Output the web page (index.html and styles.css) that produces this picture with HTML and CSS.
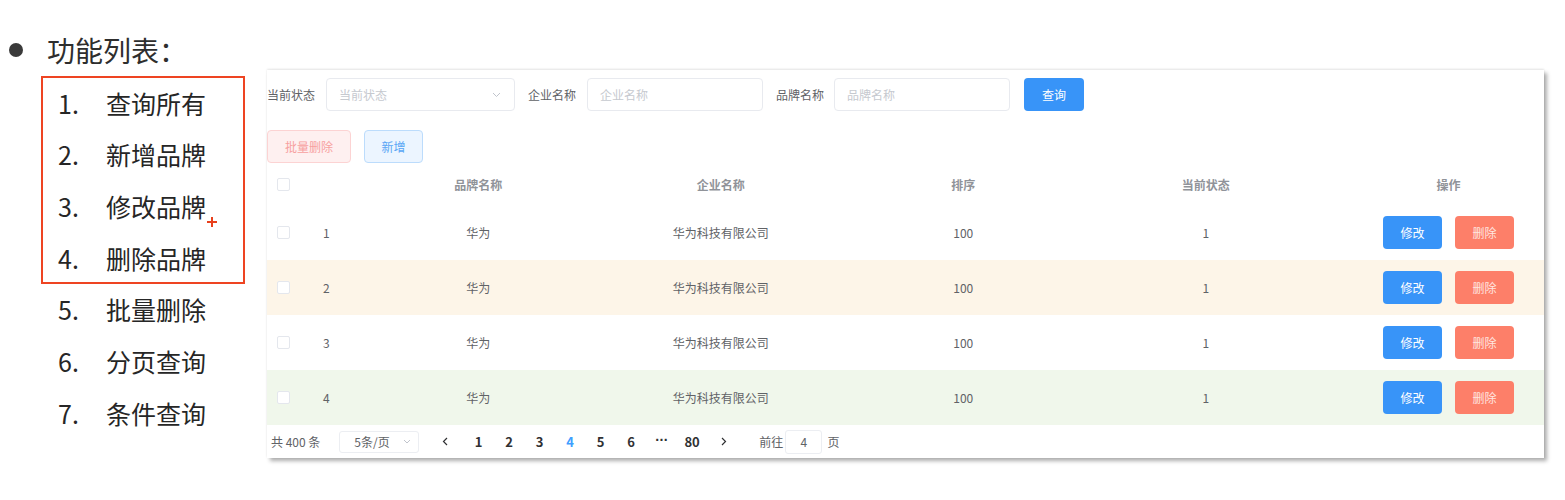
FILE: index.html
```html
<!DOCTYPE html>
<html lang="zh-CN">
<head>
<meta charset="utf-8">
<title>功能列表</title>
<link rel="stylesheet" href="styles.css">
</head>
<body>
<div class="slide">
  <div class="title"><span class="dot"></span><span class="title-text">功能列表：</span></div>
  <div class="content">
    <div class="features">
      <div class="boxed">
        <div class="item"><span class="num">1.</span>查询所有</div>
        <div class="item"><span class="num">2.</span>新增品牌</div>
        <div class="item"><span class="num">3.</span>修改品牌</div>
        <div class="item"><span class="num">4.</span>删除品牌</div>
        <svg class="cursor-plus" width="10" height="10" viewBox="0 0 10 10"><path d="M5 0v10M0 5h10" stroke="#e8401c" stroke-width="2"/></svg>
      </div>
      <div class="item plain"><span class="num">5.</span>批量删除</div>
      <div class="item plain"><span class="num">6.</span>分页查询</div>
      <div class="item plain"><span class="num">7.</span>条件查询</div>
    </div>

    <div class="panel">
      <div class="form-row">
        <span class="label">当前状态</span>
        <div class="control select">
          <span class="ph">当前状态</span>
          <svg class="chev" width="9" height="6" viewBox="0 0 9 6"><path d="M1 1l3.5 3.5L8 1" fill="none" stroke="#c0c4cc" stroke-width="1"/></svg>
        </div>
        <span class="label">企业名称</span>
        <div class="control input"><span class="ph">企业名称</span></div>
        <span class="label label-tight">品牌名称</span>
        <div class="control input"><span class="ph">品牌名称</span></div>
        <button class="btn btn-query">查询</button>
      </div>

      <div class="btn-row">
        <button class="btn btn-danger-plain">批量删除</button>
        <button class="btn btn-primary-plain">新增</button>
      </div>

      <div class="table">
        <div class="tr th">
          <div class="cell"><span class="checkbox"></span></div>
          <div class="cell idx"></div>
          <div class="cell">品牌名称</div>
          <div class="cell">企业名称</div>
          <div class="cell">排序</div>
          <div class="cell">当前状态</div>
          <div class="cell op">操作</div>
        </div>
        <div class="tr">
          <div class="cell"><span class="checkbox"></span></div>
          <div class="cell idx">1</div>
          <div class="cell">华为</div>
          <div class="cell">华为科技有限公司</div>
          <div class="cell">100</div>
          <div class="cell">1</div>
          <div class="cell op"><button class="btn btn-edit">修改</button><button class="btn btn-del">删除</button></div>
        </div>
        <div class="tr warning">
          <div class="cell"><span class="checkbox"></span></div>
          <div class="cell idx">2</div>
          <div class="cell">华为</div>
          <div class="cell">华为科技有限公司</div>
          <div class="cell">100</div>
          <div class="cell">1</div>
          <div class="cell op"><button class="btn btn-edit">修改</button><button class="btn btn-del">删除</button></div>
        </div>
        <div class="tr">
          <div class="cell"><span class="checkbox"></span></div>
          <div class="cell idx">3</div>
          <div class="cell">华为</div>
          <div class="cell">华为科技有限公司</div>
          <div class="cell">100</div>
          <div class="cell">1</div>
          <div class="cell op"><button class="btn btn-edit">修改</button><button class="btn btn-del">删除</button></div>
        </div>
        <div class="tr success">
          <div class="cell"><span class="checkbox"></span></div>
          <div class="cell idx">4</div>
          <div class="cell">华为</div>
          <div class="cell">华为科技有限公司</div>
          <div class="cell">100</div>
          <div class="cell">1</div>
          <div class="cell op"><button class="btn btn-edit">修改</button><button class="btn btn-del">删除</button></div>
        </div>
      </div>

      <div class="pager">
        <span class="total">共 400 条</span>
        <div class="sizes">
          <span>5条/页</span>
          <svg class="chev" width="8" height="5" viewBox="0 0 8 5"><path d="M1 1l3 3 3-3" fill="none" stroke="#c0c4cc" stroke-width="1"/></svg>
        </div>
        <span class="nav prev"><svg width="6" height="9" viewBox="0 0 6 9"><path d="M5 1L1.5 4.5 5 8" fill="none" stroke="#303133" stroke-width="1.2"/></svg></span>
        <div class="pages">
          <span class="pg">1</span>
          <span class="pg">2</span>
          <span class="pg">3</span>
          <span class="pg active">4</span>
          <span class="pg">5</span>
          <span class="pg">6</span>
          <span class="pg more">···</span>
          <span class="pg">80</span>
        </div>
        <span class="nav next"><svg width="6" height="9" viewBox="0 0 6 9"><path d="M1 1l3.5 3.5L1 8" fill="none" stroke="#303133" stroke-width="1.2"/></svg></span>
        <span class="jump">前往</span>
        <div class="jump-input">4</div>
        <span class="jump-suffix">页</span>
      </div>
    </div>
  </div>
</div>
</body>
</html>
```

FILE: styles.css
```css
* { box-sizing: border-box; }

html, body {
  margin: 0;
  padding: 0;
  background: #ffffff;
}

body {
  font-family: "Noto Sans CJK SC", "Noto Sans", sans-serif;
  width: 1565px;
  height: 500px;
  overflow: hidden;
}

.slide {
  width: 1565px;
  height: 500px;
}

/* title */
.title {
  display: flex;
  align-items: center;
  height: 70px;
  padding-top: 30px;
}

.dot {
  width: 14px;
  height: 14px;
  border-radius: 50%;
  background: #3a3a3a;
  margin-left: 9px;
  margin-right: 24px;
}

.title-text {
  font-size: 28px;
  line-height: 40px;
  color: #2e2e2e;
}

/* content */
.content {
  display: flex;
  align-items: flex-start;
}

.features {
  width: 226px;
  margin-left: 41px;
  padding-top: 5.6px;
}

.item {
  font-size: 25px;
  line-height: 51.7px;
  color: #262626;
  white-space: nowrap;
}

.num {
  display: inline-block;
  width: 48px;
}

.boxed {
  position: relative;
  width: 204px;
  height: 208.8px;
  border: 2px solid #ee4422;
  padding-left: 15px;
}

.boxed .item {
  height: 51.7px;
}

.plain {
  padding-left: 17px;
}

.cursor-plus {
  position: absolute;
  left: 164px;
  top: 139px;
}

/* panel */
.panel {
  width: 1277px;
  height: 388px;
  background: #ffffff;
  padding-top: 8px;
  box-shadow: 0 -1px 2px rgba(0, 0, 0, 0.10), 3px 3px 4px rgba(0, 0, 0, 0.32);
  font-size: 12px;
  color: #606266;
}

.form-row {
  display: flex;
  align-items: center;
  height: 33px;
}

.label {
  font-size: 12px;
  color: #606266;
  margin-right: 11px;
  white-space: nowrap;
}

.label-tight {
  margin-right: 10px;
}

.control {
  height: 33px;
  border: 1px solid #e8eaef;
  border-radius: 4px;
  display: flex;
  align-items: center;
  padding-left: 12px;
  margin-right: 13px;
}

.select {
  width: 189px;
  justify-content: space-between;
  padding-right: 13px;
}

.input {
  width: 176px;
}

.ph {
  color: #c6c9cf;
  font-size: 12px;
}

.btn {
  font-family: inherit;
  font-size: 12px;
  border: 1px solid transparent;
  border-radius: 4px;
  height: 33px;
  padding: 0;
  cursor: pointer;
}

.btn-query {
  width: 60px;
  background: #3894f8;
  color: #ffffff;
  margin-left: 1px;
}

.btn-row {
  display: flex;
  gap: 13px;
  margin-top: 19px;
  height: 33px;
}

.btn-danger-plain {
  width: 84px;
  background: #fef0f0;
  border-color: #fcd3d3;
  color: #f7a0a0;
}

.btn-primary-plain {
  width: 59px;
  background: #ecf5ff;
  border-color: #bcdcfc;
  color: #5aa6f5;
}

/* table */
.tr {
  display: grid;
  grid-template-columns: 30px 60px repeat(4, 242.5px) 1fr;
  align-items: center;
  height: 55px;
  color: #606266;
  font-size: 12px;
}

.th {
  height: 42px;
  color: #909399;
  font-weight: bold;
}

.warning { background: #fdf5e8; }
.success { background: #f0f7eb; }

.cell {
  display: flex;
  justify-content: center;
  align-items: center;
  white-space: nowrap;
}

.cell.idx {
  justify-content: flex-start;
  padding-left: 26px;
}

.cell.op {
  padding-left: 26px;
  gap: 13px;
}

.checkbox {
  display: block;
  width: 13px;
  height: 13px;
  border: 1px solid #e4e7ed;
  border-radius: 2px;
  background: #ffffff;
  margin-left: 3px;
}

.btn-edit {
  width: 59px;
  background: #3894f8;
  color: #ffffff;
}

.btn-del {
  width: 59px;
  background: #fd7f69;
  color: #ffe6e0;
}

/* pager */
.pager {
  display: flex;
  align-items: center;
  height: 33px;
  padding-left: 4px;
  font-size: 12px;
  color: #606266;
}

.total {
  white-space: nowrap;
}

.sizes {
  width: 80px;
  height: 22px;
  margin-left: 19px;
  border: 1px solid #eceef2;
  border-radius: 3px;
  display: flex;
  align-items: center;
  justify-content: space-between;
  padding-left: 14px;
  padding-right: 7px;
  color: #606266;
}

.nav {
  width: 30px;
  display: flex;
  justify-content: center;
  align-items: center;
}

.prev { margin-left: 11px; }
.next { margin-left: 2px; }

.pages {
  display: flex;
  margin-left: 3px;
}

.pg {
  width: 30.5px;
  text-align: center;
  font-size: 13px;
  font-weight: bold;
  color: #303133;
}

.pg.active { color: #409eff; }

.pg.more {
  font-family: "Liberation Sans", sans-serif;
  font-size: 14px;
  letter-spacing: -0.5px;
}

.jump {
  margin-left: 20px;
  white-space: nowrap;
}

.jump-input {
  width: 37px;
  height: 24px;
  margin-left: 2px;
  border: 1px solid #eceef2;
  border-radius: 3px;
  display: flex;
  align-items: center;
  justify-content: center;
  color: #606266;
}

.jump-suffix {
  margin-left: 5px;
}
```
